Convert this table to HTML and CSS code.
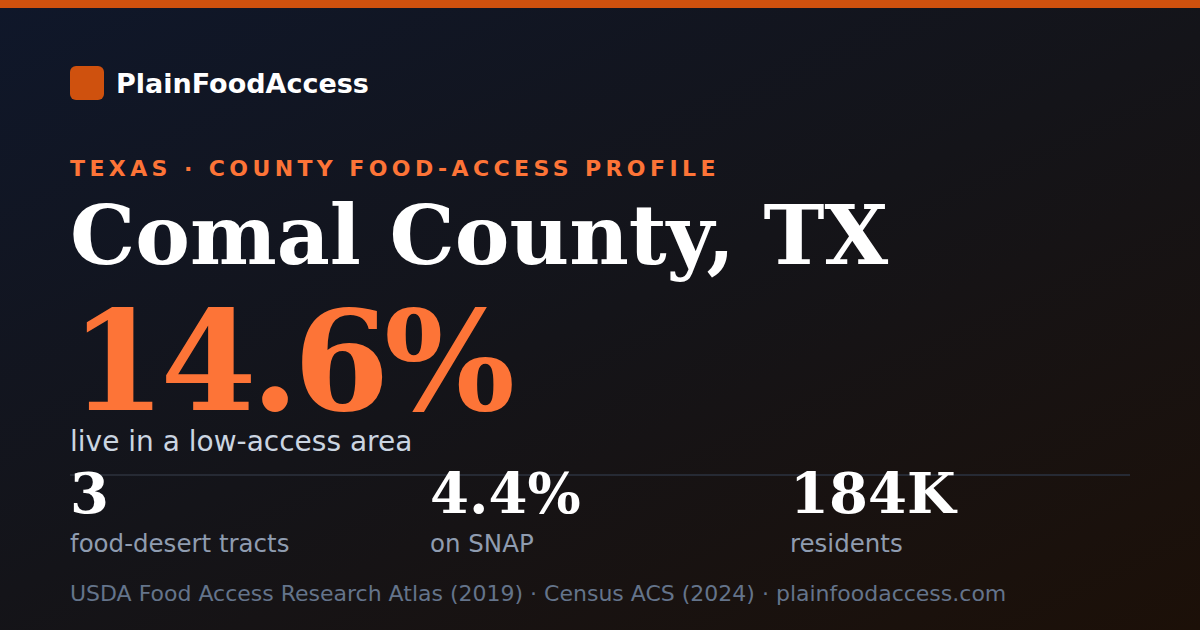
FILE: index.html
```html
<!DOCTYPE html>
<html lang="en">
<head>
<meta charset="utf-8">
<title>Comal County, TX — PlainFoodAccess</title>
<link rel="stylesheet" href="styles.css">
</head>
<body>
<div class="card">
  <div class="topbar"></div>
  <div class="content">
    <div class="brand">
      <span class="brand-mark"></span>
      <span class="brand-name">PlainFoodAccess</span>
    </div>
    <div class="kicker">TEXAS · COUNTY FOOD-ACCESS PROFILE</div>
    <h1 class="title">Comal County, TX</h1>
    <div class="hero">14.6%</div>
    <div class="hero-label">live in a low-access area</div>
    <div class="stats">
      <div class="stat">
        <div class="stat-value">3</div>
        <div class="stat-label">food-desert tracts</div>
      </div>
      <div class="stat">
        <div class="stat-value">4.4%</div>
        <div class="stat-label">on SNAP</div>
      </div>
      <div class="stat">
        <div class="stat-value">184K</div>
        <div class="stat-label">residents</div>
      </div>
    </div>
    <div class="source">USDA Food Access Research Atlas (2019) · Census ACS (2024) · plainfoodaccess.com</div>
  </div>
</div>
</body>
</html>
```

FILE: styles.css
```css
* { box-sizing: border-box; }
html, body { margin: 0; padding: 0; }
body {
  width: 1200px;
  height: 630px;
  overflow: hidden;
  font-family: "DejaVu Sans", sans-serif;
}
.card {
  width: 1200px;
  height: 630px;
  background: linear-gradient(155deg, #0f172a 0%, #141419 50%, #1c1008 100%);
  display: flex;
  flex-direction: column;
}
.topbar {
  height: 8px;
  background: #cf510e;
  flex: none;
}
.content {
  padding: 58px 70px 0 70px;
  display: flex;
  flex-direction: column;
}
.brand {
  display: flex;
  align-items: center;
  gap: 12px;
  height: 34px;
}
.brand-mark {
  width: 34px;
  height: 34px;
  border-radius: 6px;
  background: #cf510e;
}
.brand-name {
  font-weight: bold;
  font-size: 27px;
  color: #ffffff;
}
.kicker {
  margin-top: 58px;
  font-weight: bold;
  font-size: 22px;
  line-height: 22px;
  letter-spacing: 0.2em;
  color: #fd7437;
}
.title {
  margin: 14px 0 0 0;
  font-family: "DejaVu Serif", serif;
  font-weight: bold;
  font-size: 82px;
  line-height: 82px;
  color: #ffffff;
}
.hero {
  margin-top: 26px;
  font-family: "DejaVu Serif", serif;
  font-weight: bold;
  font-size: 138px;
  line-height: 120px;
  letter-spacing: -0.04em;
  color: #fd7437;
}
.hero-label {
  margin-top: 3px;
  font-size: 28px;
  line-height: 34px;
  color: #cbd5e1;
}
.stats {
  margin-top: 15px;
  border-top: 2px solid #262a34;
  display: grid;
  grid-template-columns: repeat(3, 1fr);
  gap: 20px;
}
.stat-value {
  margin-top: -11px;
  font-family: "DejaVu Serif", serif;
  font-weight: bold;
  font-size: 56px;
  line-height: 56px;
  color: #ffffff;
}
.stat-label {
  margin-top: 8px;
  font-size: 24.5px;
  line-height: 30px;
  color: #8f9cb0;
}
.source {
  margin-top: 21px;
  font-size: 22px;
  line-height: 28px;
  color: #64748b;
}
```
